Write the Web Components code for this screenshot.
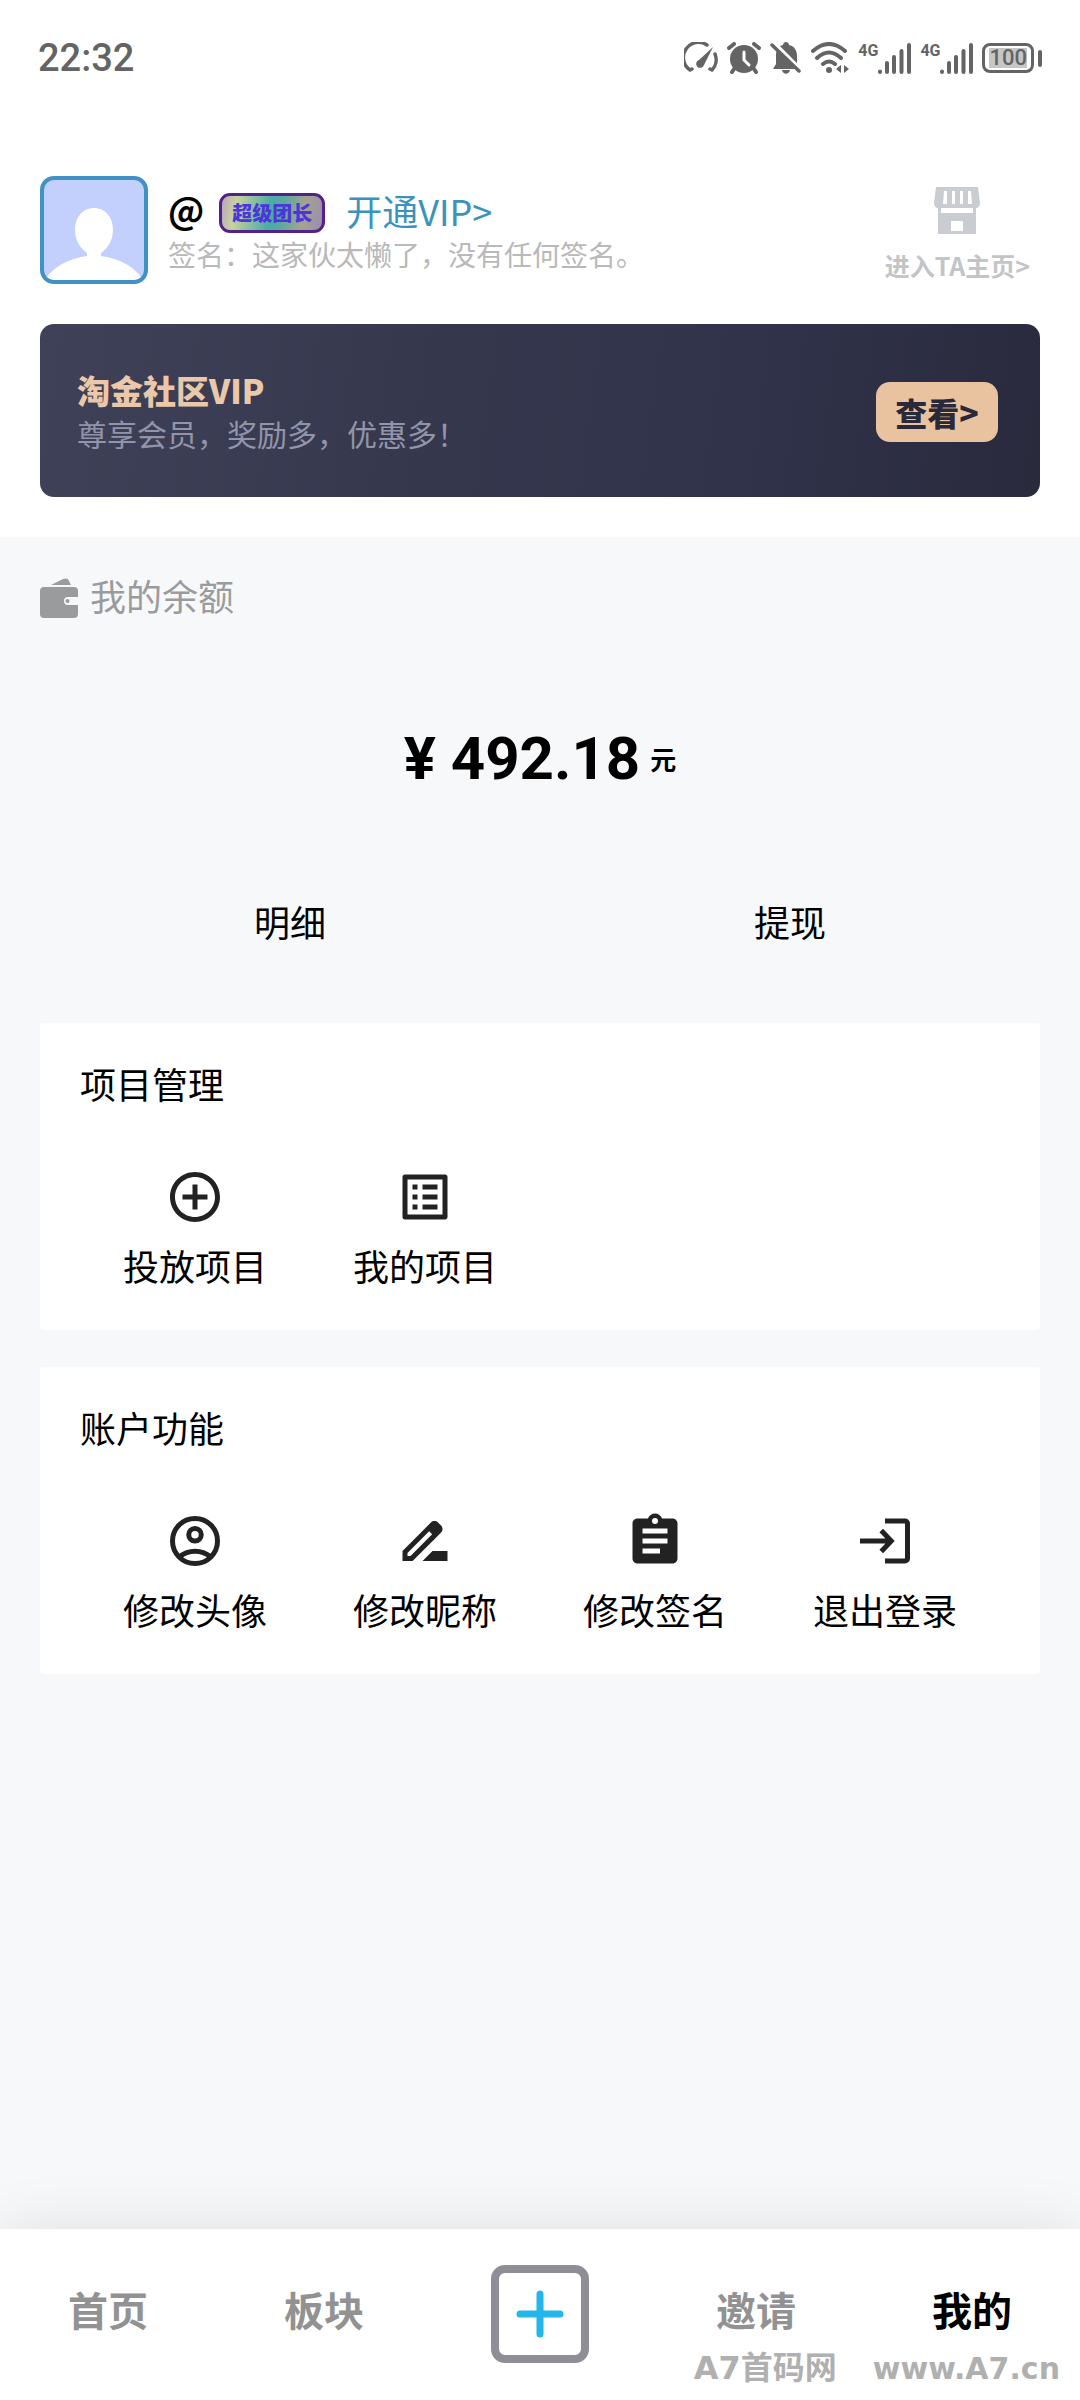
<!DOCTYPE html>
<html lang="zh-CN">
<head>
<meta charset="utf-8">
<meta name="viewport" content="width=device-width, initial-scale=1">
<title>我的</title>
<style>
  :root {
    --color-page: #f7f8fa;
    --color-muted: #9a9b9d;
    --color-icon: #222;
    --gutter: 40px;
  }

  body {
    margin: 0;
    background: var(--color-page);
    color: #000;
    font-family: "Noto Sans CJK SC", "Noto Sans", sans-serif;
    font-size: 36px;
    line-height: 42px;
  }
</style>
</head>
<body>
<app-page>
  <status-bar slot="header" time="22:32" battery="100"></status-bar>
  <profile-header slot="header" name="@" badge="超级团长" signature="这家伙太懒了，没有任何签名。"></profile-header>
  <vip-banner slot="header" heading="淘金社区VIP" text="尊享会员，奖励多，优惠多！"></vip-banner>

  <balance-panel amount="492.18"></balance-panel>
  <menu-section heading="项目管理">
    <menu-item icon="add" label="投放项目"></menu-item>
    <menu-item icon="list" label="我的项目"></menu-item>
  </menu-section>
  <menu-section heading="账户功能">
    <menu-item icon="account" label="修改头像"></menu-item>
    <menu-item icon="rename" label="修改昵称"></menu-item>
    <menu-item icon="assignment" label="修改签名"></menu-item>
    <menu-item icon="exit" label="退出登录"></menu-item>
  </menu-section>

  <tab-bar slot="footer">
    <tab-item label="首页"></tab-item>
    <tab-item label="板块"></tab-item>
    <add-button></add-button>
    <tab-item label="邀请"></tab-item>
    <tab-item label="我的" active></tab-item>
  </tab-bar>
  <site-mark slot="footer" name="A7首码网" site="www.A7.cn"></site-mark>
</app-page>

<script>
/* Base class: opens the shadow root and draws once */
class BaseElement extends HTMLElement {
  constructor() {
    super();
    this.attachShadow({ mode: "open" });
  }

  connectedCallback() {
    this.shadowRoot.innerHTML = `<style>${this.styles}</style>${this.markup}`;
  }

  attr(name) {
    return this.getAttribute(name) || "";
  }
}

/* Page frame */
class AppPage extends BaseElement {
  get styles() {
    return `
      :host {
        display: flex;
        flex-direction: column;
        min-height: 100vh;
        position: relative;
      }
      header {
        background: #fff;
        padding-bottom: 40px;
      }
      main {
        flex: 1;
        padding: 40px var(--gutter);
      }
    `;
  }

  get markup() {
    return `
      <header><slot name="header"></slot></header>
      <main><slot></slot></main>
      <slot name="footer"></slot>
    `;
  }
}
customElements.define("app-page", AppPage);

/* Phone status bar */
class StatusBar extends BaseElement {
  get styles() {
    return `
      :host {
        display: flex;
        align-items: center;
        justify-content: space-between;
        height: 116px;
        padding: 0 38px;
        color: #646464;
        font-family: Roboto, sans-serif;
      }
      time {
        font-size: 38px;
        font-weight: 500;
      }
      .icons {
        display: flex;
        align-items: center;
        gap: 9px;
      }
      svg {
        display: block;
        fill: none;
        stroke: currentColor;
        stroke-width: 4;
        stroke-linecap: round;
      }
      .signal {
        display: flex;
        align-items: flex-start;
      }
      .signal span {
        font-size: 16px;
        line-height: 16px;
        font-weight: 700;
      }
      .battery {
        display: flex;
        align-items: center;
        gap: 4px;
      }
      .battery__case {
        border: 3px solid currentColor;
        border-radius: 8px;
        padding: 2px 4px;
      }
      .battery__level {
        display: block;
        background: #c6c6c6;
        font-size: 22px;
        line-height: 20px;
        font-weight: 500;
      }
      .battery__tip {
        width: 4px;
        height: 17px;
        border-radius: 2px;
        background: currentColor;
      }
    `;
  }

  get signal() {
    return `
      <div class="signal">
        <span>4G</span>
        <svg width="33" height="31" viewBox="0 0 33 31">
          <path d="M2 28.500v.5M9 20v9M16 14v15M23.500 8v21M31 2v27"/>
        </svg>
      </div>
    `;
  }

  get markup() {
    return `
      <time>${this.attr("time")}</time>
      <div class="icons">
        <svg width="34" height="32" viewBox="0 0 34 32">
          <path d="M6 28A15 15 0 0 1 23 3M31 12A15 15 0 0 1 28 28M6 28l2-1M28 28l-2-1" stroke-width="3.500"/>
          <path d="M29 5L15 18a4 4 0 1 0 5 5z" fill="currentColor" stroke="none"/>
        </svg>
        <svg width="34" height="32" viewBox="0 0 34 32">
          <circle cx="17" cy="17" r="14" fill="currentColor" stroke="none"/>
          <path d="M2 6l5-4M32 6l-5-4M7 27l-2 3M27 27l2 3"/>
          <path d="M17 10v8l5 5" stroke="#fff" stroke-width="3"/>
        </svg>
        <svg width="32" height="32" viewBox="0 0 32 32">
          <path d="M3 27l3-5V14c0-6 2-10 7-11 0-4 6-4 6 0 5 1 8 5 8 11v8l3 5zM12 28h8c-1 5-7 5-8 0z" fill="currentColor" stroke="none"/>
          <path d="M2 -1L32 29" stroke="#fff" stroke-width="4"/>
          <path d="M2 3l27 26" stroke-width="3.500"/>
        </svg>
        <svg width="38" height="32" viewBox="0 0 38 32">
          <path d="M2 9Q18-5 34 9M6 16q12-11 24 0M12 22q6-5 12 0"/>
          <circle cx="18" cy="28" r="3" fill="currentColor" stroke="none"/>
          <path d="M30 23v8l-5-4zM33 23v8l5-4z" fill="currentColor" stroke="none"/>
        </svg>
        ${this.signal}
        ${this.signal}
        <div class="battery">
          <div class="battery__case"><span class="battery__level">${this.attr("battery")}</span></div>
          <div class="battery__tip"></div>
        </div>
      </div>
    `;
  }
}
customElements.define("status-bar", StatusBar);

/* Avatar, name, badge and signature */
class ProfileHeader extends BaseElement {
  get styles() {
    return `
      :host {
        display: flex;
        align-items: flex-end;
        gap: 20px;
        padding: 60px var(--gutter) 0;
      }
      .avatar {
        box-sizing: border-box;
        width: 108px;
        height: 108px;
        border: 4px solid #4192c3;
        border-radius: 14px;
        background: #c3cffd;
        overflow: hidden;
      }
      .avatar svg {
        display: block;
        width: 100%;
        height: 100%;
      }
      .info {
        flex: 1;
        padding-bottom: 9px;
      }
      .name {
        display: flex;
        align-items: flex-start;
        gap: 15px;
        height: 42px;
        line-height: 38px;
      }
      .name strong {
        font-weight: 700;
        font-size: 36px;
        line-height: 34px;
      }
      .badge {
        align-self: flex-end;
        box-sizing: border-box;
        height: 40px;
        padding: 0 10px;
        border: 3px solid #542089;
        border-radius: 11px;
        background: linear-gradient(100deg, #b9a6c0 0%, #c9d29c 14%, #49ada5 48%, #5aa9a2 60%, #a5a48c 80%, #9a8ab4 100%);
        color: #4c35dc;
        font-size: 20px;
        line-height: 34px;
        font-weight: 900;
      }
      .vip {
        margin-left: 6px;
        color: #3b93bb;
        text-decoration: none;
      }
      .signature {
        margin: 0;
        color: #b9b9b9;
        font-size: 28px;
      }
      .home {
        display: flex;
        flex-direction: column;
        align-items: center;
        gap: 16px;
        padding: 0 10px 5px 0;
        color: #c2c4c6;
        font-size: 25px;
        line-height: 28px;
        font-weight: 700;
        text-decoration: none;
      }
    `;
  }

  get markup() {
    return `
      <div class="avatar">
        <svg viewBox="0 0 100 100" fill="#fff">
          <path d="M50 28c11 0 19 9 19 22 0 11-6 19-12 23v3c20 3 34 11 42 24H1c8-13 22-21 42-24v-3c-6-4-12-12-12-23 0-13 8-22 19-22z"/>
        </svg>
      </div>
      <div class="info">
        <div class="name">
          <strong>${this.attr("name")}</strong>
          <span class="badge">${this.attr("badge")}</span>
          <a class="vip" href="#vip">开通VIP&gt;</a>
        </div>
        <p class="signature">签名：${this.attr("signature")}</p>
      </div>
      <a class="home" href="#home">
        <svg width="48" height="48" viewBox="0 0 48 48" fill="#c9ccd0">
          <path d="M3 0h42l2 16c0 3-2 5-4 5v26H5V21c-2 0-4-2-4-5z"/>
          <path d="M8 21h32v5H8zM18 34h12v10H18zM11 4l-1 13h4V4zM19 4v13h3V4zM27 4v13h3V4zM35 4v13h4L38 4z" fill="#fff"/>
        </svg>
        <span>进入TA主页&gt;</span>
      </a>
    `;
  }
}
customElements.define("profile-header", ProfileHeader);

/* Dark VIP banner */
class VipBanner extends BaseElement {
  get styles() {
    return `
      :host {
        display: flex;
        align-items: center;
        justify-content: space-between;
        margin: 40px var(--gutter) 0;
        padding: 45px 42px 42px 37px;
        border-radius: 14px;
        background: linear-gradient(98deg, #3f4158 0%, #35384d 40%, #30334a 70%, #2a2a3d 100%);
      }
      h2, p {
        margin: 0;
        line-height: 43px;
      }
      h2 {
        color: #eac8a9;
        font-size: 33px;
        font-weight: 900;
      }
      p {
        color: #9294a9;
        font-size: 30px;
      }
      button {
        width: 122px;
        height: 60px;
        padding: 0;
        border: 0;
        border-radius: 14px;
        background: #e9c3a0;
        color: #29293a;
        font: inherit;
        font-size: 32px;
        font-weight: 900;
        cursor: pointer;
      }
    `;
  }

  get markup() {
    return `
      <div>
        <h2>${this.attr("heading")}</h2>
        <p>${this.attr("text")}</p>
      </div>
      <button type="button">查看&gt;</button>
    `;
  }
}
customElements.define("vip-banner", VipBanner);

/* Balance and its two actions */
class BalancePanel extends BaseElement {
  get styles() {
    return `
      :host {
        display: block;
        margin-bottom: 62px;
      }
      h2 {
        display: flex;
        align-items: flex-start;
        gap: 12px;
        margin: 0 0 100px;
        color: var(--color-muted);
        font-size: 36px;
        line-height: 36px;
        font-weight: 400;
      }
      .amount {
        display: flex;
        align-items: center;
        justify-content: center;
        gap: 10px;
        height: 80px;
        margin-bottom: 82px;
        font-family: Roboto, sans-serif;
        font-size: 60px;
        font-weight: 700;
      }
      .amount small {
        font-family: "Noto Sans CJK SC", sans-serif;
        font-size: 26px;
        font-weight: 700;
      }
      .actions {
        display: grid;
        grid-template-columns: 1fr 1fr;
      }
      button {
        height: 80px;
        border: 0;
        background: none;
        color: inherit;
        font: inherit;
        cursor: pointer;
      }
    `;
  }

  get markup() {
    return `
      <h2>
        <svg width="38" height="42" viewBox="0 0 38 42" fill="currentColor">
          <path d="M11 8L23 2c3-1 5-1 6 2l2 4z"/>
          <path fill-rule="evenodd" d="M4 10h30a4 4 0 0 1 4 4v6H28a4 4 0 0 0 0 8h10v9a4 4 0 0 1-4 4H4a4 4 0 0 1-4-4V14a4 4 0 0 1 4-4z"/>
          <circle cx="27.500" cy="24" r="2"/>
        </svg>
        我的余额
      </h2>
      <div class="amount"><span>¥ ${this.attr("amount")}</span><small>元</small></div>
      <div class="actions">
        <button type="button">明细</button>
        <button type="button">提现</button>
      </div>
    `;
  }
}
customElements.define("balance-panel", BalancePanel);

/* White card with a grid of items */
class MenuSection extends BaseElement {
  get styles() {
    return `
      :host {
        display: block;
        margin-bottom: 37px;
        padding: 40px 40px 44px;
        border-radius: 4px;
        background: #fff;
      }
      h3 {
        margin: 0 0 64px;
        font-size: 36px;
        line-height: 40px;
        font-weight: 400;
      }
      .grid {
        display: grid;
        grid-template-columns: repeat(4, 1fr);
      }
    `;
  }

  get markup() {
    return `
      <h3>${this.attr("heading")}</h3>
      <div class="grid"><slot></slot></div>
    `;
  }
}
customElements.define("menu-section", MenuSection);

const icons = {
  add: `<path d="M13 7h-2v4H7v2h4v4h2v-4h4v-2h-4V7zm-1-5C6.480 2 2 6.480 2 12s4.480 10 10 10 10-4.480 10-10S17.520 2 12 2zm0 18c-4.410 0-8-3.590-8-8s3.590-8 8-8 8 3.590 8 8-3.590 8-8 8z"/>`,
  list: `<path d="M11 7h6v2h-6zm0 4h6v2h-6zm0 4h6v2h-6zM7 7h2v2H7zm0 4h2v2H7zm0 4h2v2H7zM20.100 3H3.900c-.5 0-.9.4-.9.9v16.200c0 .4.4.9.9.9h16.200c.4 0 .9-.5.9-.9V3.900c0-.5-.5-.9-.9-.9zM19 19H5V5h14v14z"/>`,
  account: `<g fill="none" stroke="currentColor" stroke-width="2"><circle cx="12" cy="12" r="9"/><circle cx="12" cy="9.500" r="2.500"/><path d="M5.800 18.300c3.600-3 8.800-3 12.400 0"/></g>`,
  rename: `<path d="M18.410 5.800L17.200 4.590c-.78-.78-2.050-.78-2.830 0l-2.680 2.680L3 15.960V20h4.040l8.740-8.740 2.630-2.630c.79-.78.79-2.050 0-2.830zM6.210 18H5v-1.210l8.660-8.660 1.210 1.210L6.210 18zM11 20l4-4h6v4H11z"/>`,
  assignment: `<path fill-rule="evenodd" d="M19 3h-4.180C14.400 1.840 13.300 1 12 1s-2.400.84-2.820 2H5c-1.100 0-2 .9-2 2v14c0 1.100.9 2 2 2h14c1.100 0 2-.9 2-2V5c0-1.100-.9-2-2-2zm-7-.2a1.200 1.200 0 1 1 0 2.400 1.200 1.200 0 0 1 0-2.400zM14 17H7v-2h7v2zm3-4H7v-2h10v2zm0-4H7V7h10v2z"/>`,
  exit: `<path fill="none" stroke="currentColor" stroke-width="2" d="M12 4h8a1 1 0 0 1 1 1v14a1 1 0 0 1-1 1h-8M2 12h12M10.500 7.800l4 4.200-4 4.200"/>`
};

class MenuItem extends BaseElement {
  get styles() {
    return `
      :host {
        display: block;
      }
      button {
        display: flex;
        flex-direction: column;
        align-items: center;
        gap: 17px;
        width: 100%;
        padding: 0;
        border: 0;
        background: none;
        color: inherit;
        font: inherit;
        cursor: pointer;
      }
      svg {
        width: 60px;
        height: 60px;
        color: var(--color-icon);
        fill: currentColor;
      }
    `;
  }

  get markup() {
    return `
      <button type="button">
        <svg viewBox="0 0 24 24">${icons[this.attr("icon")]}</svg>
        <span>${this.attr("label")}</span>
      </button>
    `;
  }
}
customElements.define("menu-item", MenuItem);

/* Bottom tabs */
class TabBar extends BaseElement {
  get styles() {
    return `
      :host {
        display: block;
        background: #fff;
        box-shadow: 0 0 60px rgba(0, 0, 0, 0.1);
      }
      nav {
        display: grid;
        grid-template-columns: repeat(5, 1fr);
        align-items: center;
        padding: 36px 0 37px;
      }
    `;
  }

  get markup() {
    return `<nav><slot></slot></nav>`;
  }
}
customElements.define("tab-bar", TabBar);

class TabItem extends BaseElement {
  get styles() {
    return `
      :host {
        display: block;
        padding-bottom: 9px;
        text-align: center;
        color: #929292;
      }
      :host([active]) {
        color: #000;
      }
      a {
        color: inherit;
        font-size: 40px;
        font-weight: 700;
        text-decoration: none;
      }
    `;
  }

  get markup() {
    return `<a href="#">${this.attr("label")}</a>`;
  }
}
customElements.define("tab-item", TabItem);

class AddButton extends BaseElement {
  get styles() {
    return `
      :host {
        display: flex;
        justify-content: center;
      }
      button {
        display: grid;
        place-items: center;
        width: 98px;
        height: 98px;
        padding: 0;
        border: 8px solid #8f8e96;
        border-radius: 14px;
        background: #fff;
        cursor: pointer;
      }
    `;
  }

  get markup() {
    return `
      <button type="button" aria-label="发布">
        <svg width="48" height="48" viewBox="0 0 48 48" fill="none" stroke="#22b6ea" stroke-width="7" stroke-linecap="round">
          <path d="M24 4v40M4 24h40"/>
        </svg>
      </button>
    `;
  }
}
customElements.define("add-button", AddButton);

/* Site mark lying over the tabs */
class SiteMark extends BaseElement {
  get styles() {
    return `
      :host {
        position: absolute;
        right: 20px;
        bottom: 13px;
        display: flex;
        align-items: baseline;
        gap: 36px;
        color: #b0b0b0;
        font-family: "DejaVu Sans", "Noto Sans CJK SC", sans-serif;
        font-size: 30px;
        line-height: 36px;
        font-weight: 700;
        pointer-events: none;
      }
      .name {
        font-size: 32px;
      }
    `;
  }

  get markup() {
    return `<span class="name">${this.attr("name")}</span><span>${this.attr("site")}</span>`;
  }
}
customElements.define("site-mark", SiteMark);
</script>
</body>
</html>
